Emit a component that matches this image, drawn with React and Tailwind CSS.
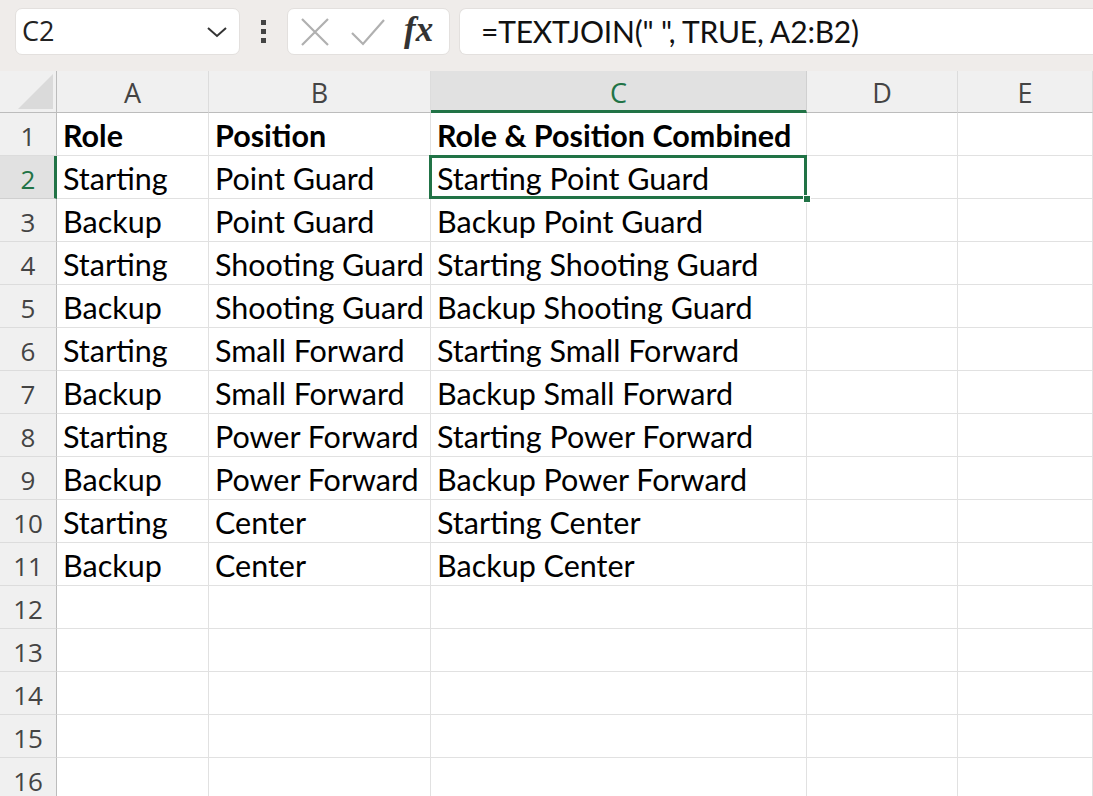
import React from "react";

const rows = [
  ["Role", "Position", "Role & Position Combined"],
  ["Starting", "Point Guard", "Starting Point Guard"],
  ["Backup", "Point Guard", "Backup Point Guard"],
  ["Starting", "Shooting Guard", "Starting Shooting Guard"],
  ["Backup", "Shooting Guard", "Backup Shooting Guard"],
  ["Starting", "Small Forward", "Starting Small Forward"],
  ["Backup", "Small Forward", "Backup Small Forward"],
  ["Starting", "Power Forward", "Starting Power Forward"],
  ["Backup", "Power Forward", "Backup Power Forward"],
  ["Starting", "Center", "Starting Center"],
  ["Backup", "Center", "Backup Center"],
  ["", "", ""],
  ["", "", ""],
  ["", "", ""],
  ["", "", ""],
  ["", "", ""],
];

const cellFont = { fontFamily: "Lato, 'Open Sans', sans-serif" };

function Cell({ children, bold, selected, className = "" }) {
  return (
    <div
      className={`relative h-[43px] border-r border-b border-[#e1e1e1] flex items-end pb-[2px] pl-[6px] overflow-visible whitespace-nowrap text-[30.5px] leading-[36px] text-black ${bold ? "font-bold" : ""} ${className}`}
      style={cellFont}
    >
      <span className="relative z-10">{children}</span>
      {selected && (
        <>
          <div className="absolute -left-[2px] -top-[1px] -right-[1px] -bottom-[1px] border-[3px] border-[#217346] z-20 pointer-events-none" />
          <div className="absolute -right-[5px] -bottom-[5px] w-[8px] h-[8px] bg-[#217346] border border-white z-30" />
        </>
      )}
    </div>
  );
}

export default function App() {
  return (
    <div className="w-[1093px] h-[796px] overflow-hidden bg-white relative" style={{ fontFamily: "'Segoe UI', 'Open Sans', sans-serif" }}>
      {/* Formula bar */}
      <div className="h-[71px] bg-[#efecea] flex items-start pt-[8px] pl-[15px]">
        <div className="w-[225px] h-[47px] bg-white rounded-[7px] border border-[#e3e0de] flex items-center justify-between pl-[6px] pr-[11px]">
          <span className="text-[27px] text-[#222]" style={{ fontFamily: "'Open Sans', sans-serif" }}>C2</span>
          <svg width="22" height="14" viewBox="0 0 22 14">
            <path d="M2 3 L11 11 L20 3" fill="none" stroke="#333" strokeWidth="2" />
          </svg>
        </div>
        <div className="w-[47px] h-[47px] flex flex-col items-center justify-center gap-[4px]">
          <div className="w-[5px] h-[5px] bg-[#444]" />
          <div className="w-[5px] h-[5px] bg-[#444]" />
          <div className="w-[5px] h-[5px] bg-[#444]" />
        </div>
        <div className="w-[163px] h-[47px] bg-white rounded-[7px] border border-[#e3e0de] flex items-center pl-[12px]">
          <svg width="30" height="30" viewBox="0 0 30 30">
            <path d="M2 2 L28 28 M28 2 L2 28" stroke="#b0b0b0" strokeWidth="2.2" fill="none" />
          </svg>
          <svg width="36" height="30" viewBox="0 0 36 30" className="ml-[20px]">
            <path d="M2 16 L13 27 L34 3" stroke="#b0b0b0" strokeWidth="2.2" fill="none" />
          </svg>
          <span className="ml-[18px] text-[35px] italic font-semibold text-[#333] leading-none -mt-[4px]" style={{ fontFamily: "'Liberation Serif', serif" }}>fx</span>
        </div>
        <div className="ml-[9px] flex-1 h-[47px] bg-white rounded-l-[7px] border border-r-0 border-[#e3e0de] flex items-center pl-[21px]">
          <span className="text-[30px] text-[#111] tracking-[-0.2px]" style={{ fontFamily: "Lato, 'Open Sans', sans-serif" }}>=TEXTJOIN(" ", TRUE, A2:B2)</span>
        </div>
      </div>

      {/* Grid */}
      <div className="grid grid-cols-[57px_152px_222px_376px_151px_1fr]">
        {/* header row */}
        <div className="h-[42px] bg-[#f0f0f0] border-r border-b border-[#bcbcbc] relative">
          <svg className="absolute right-[3px] bottom-[3px]" width="35" height="35" viewBox="0 0 35 35">
            <path d="M35 0 L35 35 L0 35 Z" fill="#dadada" />
          </svg>
        </div>
        {["A", "B", "C", "D", "E"].map((l) => (
          <div
            key={l}
            className={`h-[42px] flex items-center justify-center text-[27px] border-r pt-[4px] ${l === "C" ? "bg-[#e1e1e1] text-[#217346] border-b-[3px] border-b-[#217346] border-r-[#d0d0d0]" : "bg-[#f0f0f0] text-[#444] border-b border-b-[#bcbcbc] border-r-[#dcdcdc]"}`}
            style={{ fontFamily: "'Open Sans', sans-serif" }}
          >
            <span className={l === "C" ? "mt-[2px]" : ""}>{l}</span>
          </div>
        ))}
        {rows.map((r, i) => (
          <React.Fragment key={i}>
            <div
              className={`h-[43px] flex items-center justify-center text-[26px] border-b pt-[5px] ${i === 1 ? "bg-[#e1e1e1] text-[#217346] border-r-[3px] border-r-[#217346] border-b-[#cfcfcf]" : "bg-[#f0f0f0] text-[#444] border-r border-r-[#bcbcbc] border-b-[#dcdcdc]"}`}
              style={{ fontFamily: "'Open Sans', sans-serif" }}
            >
              <span className={i === 1 ? "ml-[2px]" : ""}>{i + 1}</span>
            </div>
            <Cell bold={i === 0}>{r[0]}</Cell>
            <Cell bold={i === 0}>{r[1]}</Cell>
            <Cell bold={i === 0} selected={i === 1}>{r[2]}</Cell>
            <Cell />
            <Cell />
          </React.Fragment>
        ))}
      </div>
    </div>
  );
}
